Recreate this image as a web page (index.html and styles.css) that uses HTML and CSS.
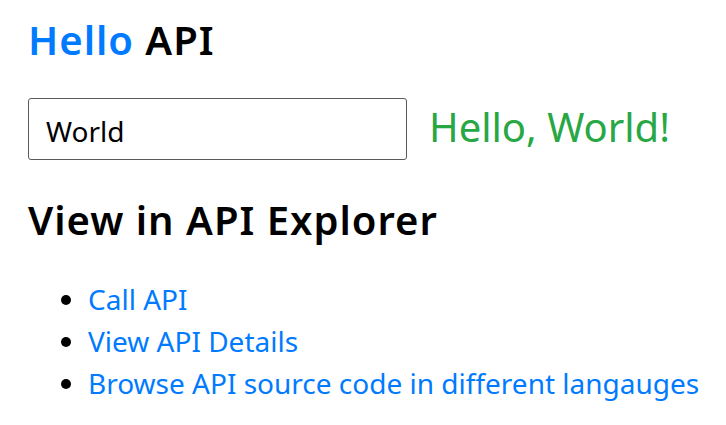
FILE: index.html
```html
<!DOCTYPE html>
<html lang="en">
<head>
<meta charset="utf-8">
<title>Hello API</title>
<link rel="stylesheet" href="styles.css">
</head>
<body>
<main class="page">
  <h1 class="title"><span class="title-accent">Hello</span> API</h1>
  <div class="greet-row">
    <input class="name-input" type="text" value="World">
    <span class="greeting">Hello, World!</span>
  </div>
  <h2 class="section-title">View in API Explorer</h2>
  <ul class="links">
    <li><a class="link" href="#">Call API</a></li>
    <li><a class="link" href="#">View API Details</a></li>
    <li><a class="link" href="#">Browse API source code in different langauges</a></li>
  </ul>
</main>
</body>
</html>
```
FILE: styles.css
```css
html, body {
  margin: 0;
  padding: 0;
  background: #fff;
}
body {
  font-family: "Noto Sans", "Open Sans", sans-serif;
  color: #000;
  font-size: 28px;
  line-height: 1.5;
}
.page {
  padding: 16px 0 0 28px;
}
.title {
  margin: 0;
  font-size: 40px;
  font-weight: 600;
  letter-spacing: 1px;
  line-height: 1.2;
}
.title-accent {
  color: #007bff;
}
.greet-row {
  display: flex;
  align-items: baseline;
  margin-top: 34px;
}
.name-input {
  box-sizing: border-box;
  width: 379px;
  height: 62px;
  margin: 0;
  padding: 4px 17px 0;
  border: 1px solid #5a5a5a;
  border-radius: 3px;
  font-family: "Noto Sans", "Open Sans", sans-serif;
  font-size: 28px;
  color: #000;
  background: #fff;
  outline: none;
}
.greeting {
  margin-left: 22px;
  font-size: 40px;
  line-height: 1.2;
  color: #28a745;
}
.section-title {
  margin: 36px 0 0;
  font-size: 40px;
  font-weight: 600;
  letter-spacing: 1px;
  line-height: 1.2;
}
.links {
  margin: 34px 0 0;
  padding-left: 60px;
  line-height: 42px;
}
.link {
  color: #007bff;
  text-decoration: none;
}
```
